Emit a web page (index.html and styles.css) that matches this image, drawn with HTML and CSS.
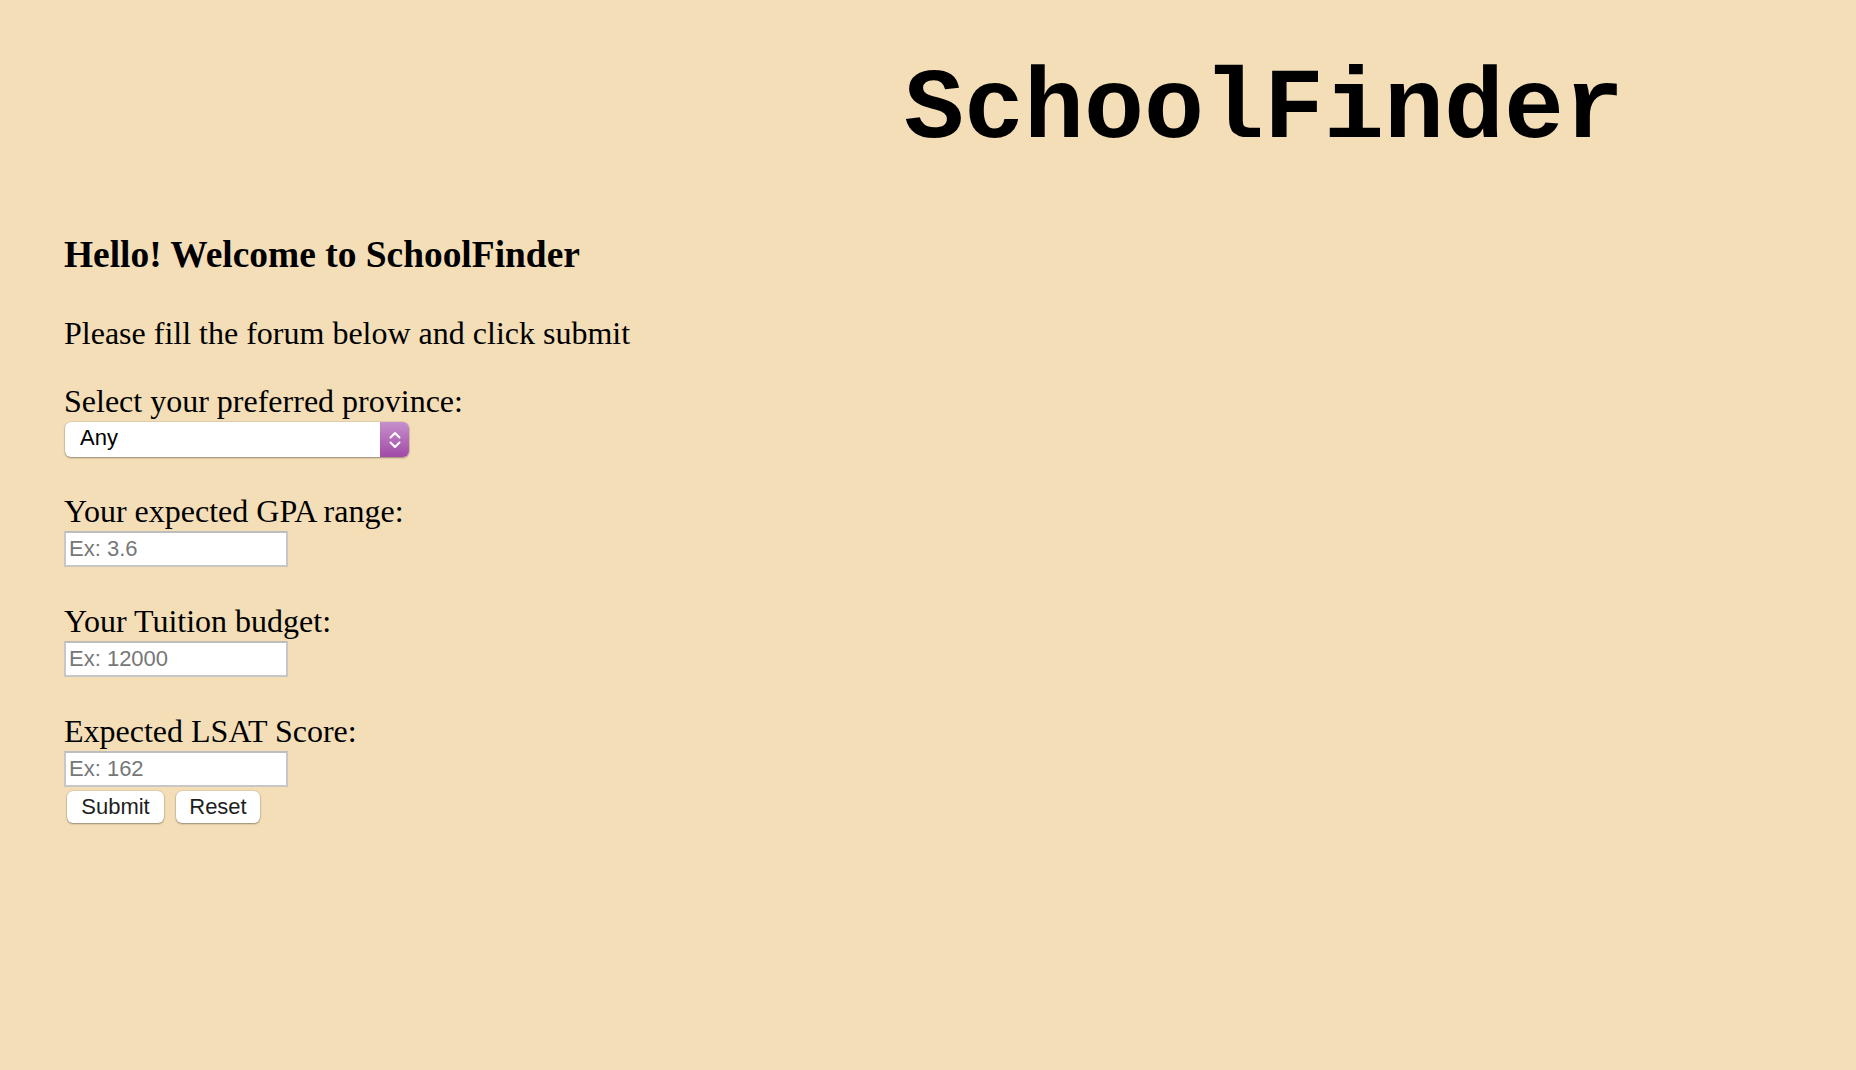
FILE: index.html
```html
<!DOCTYPE html>
<html lang="en">
<head>
<meta charset="utf-8">
<title>SchoolFinder</title>
<link rel="stylesheet" href="styles.css">
</head>
<body>
<header class="top">
  <h1 class="brand">SchoolFinder</h1>
</header>
<main class="content">
  <h3 class="welcome">Hello! Welcome to SchoolFinder</h3>
  <p class="intro">Please fill the forum below and click submit</p>
  <form class="finder">
    <div class="group">
      <label class="label" for="prov">Select your preferred province:</label>
      <div class="select-wrap">
        <select id="prov" class="select">
          <option>Any</option>
        </select>
        <span class="select-arrow">
          <svg width="14" height="20" viewBox="0 0 14 20" fill="none" stroke="#fff" stroke-width="2" stroke-linecap="round" stroke-linejoin="round"><path d="M2.5 7.5 L7 3 L11.5 7.5"/><path d="M2.5 12.5 L7 17 L11.5 12.5"/></svg>
        </span>
      </div>
    </div>
    <div class="group">
      <label class="label" for="gpa">Your expected GPA range:</label>
      <input id="gpa" class="field" type="text" placeholder="Ex: 3.6">
    </div>
    <div class="group">
      <label class="label" for="tuition">Your Tuition budget:</label>
      <input id="tuition" class="field" type="text" placeholder="Ex: 12000">
    </div>
    <div class="group last">
      <label class="label" for="lsat">Expected LSAT Score:</label>
      <input id="lsat" class="field" type="text" placeholder="Ex: 162">
    </div>
    <div class="actions">
      <button type="submit" class="btn btn-submit">Submit</button>
      <button type="reset" class="btn btn-reset">Reset</button>
    </div>
  </form>
</main>
</body>
</html>
```

FILE: styles.css
```css
html, body {
  margin: 0;
  padding: 0;
}
body {
  background: #f3deb8;
  color: #000;
  font-family: "Liberation Serif", "Times New Roman", serif;
  font-size: 32px;
  min-height: 1070px;
}
.top {
  padding-top: 54px;
  padding-left: 904px;
}
.brand {
  margin: 0;
  font-family: "Courier New", "Nimbus Mono PS", "Nimbus Mono L", FreeMono, "Liberation Mono", monospace;
  font-weight: bold;
  font-size: 100px;
  line-height: 114px;
}
.content {
  padding-left: 64px;
  padding-top: 65px;
}
.welcome {
  margin: 0;
  font-size: 37.44px;
  font-weight: bold;
  line-height: 44px;
}
.intro {
  margin: 38px 0 0 0;
  line-height: 36px;
}
.finder {
  margin-top: 32px;
  display: flex;
  flex-direction: column;
}
.group {
  display: flex;
  flex-direction: column;
  align-items: flex-start;
  margin-bottom: 36px;
}
.group.last {
  margin-bottom: 4px;
}
.label {
  line-height: 36px;
}
.select-wrap {
  position: relative;
  margin-top: 3px;
  margin-left: 1px;
  width: 344px;
  height: 35px;
  border-radius: 6px;
  background: #fff;
  box-shadow: 0 1px 2px rgba(0,0,0,0.35), 0 0 0 0.5px rgba(0,0,0,0.12);
  overflow: hidden;
}
.select {
  appearance: none;
  -webkit-appearance: none;
  box-sizing: border-box;
  display: block;
  border: 0;
  margin: 0;
  width: 100%;
  height: 35px;
  line-height: 32px;
  padding: 0 0 3px 15px;
  background: transparent;
  font-family: "Liberation Sans", Arial, sans-serif;
  font-size: 22px;
  color: #000;
  outline: none;
}
.select-arrow {
  position: absolute;
  right: 0;
  top: 0;
  width: 29px;
  height: 35px;
  background: linear-gradient(#c690cb, #a14aa6);
  display: flex;
  align-items: center;
  justify-content: center;
  pointer-events: none;
}
.field {
  margin: 2px 0 0 0;
  box-sizing: border-box;
  width: 224px;
  height: 36px;
  border: 2px solid #c7c7c7;
  border-top-color: #bdbdbd;
  background: #fff;
  padding: 0 0 1px 3px;
  font-family: "Liberation Sans", Arial, sans-serif;
  font-size: 22px;
  color: #000;
  outline: none;
}
.field::placeholder {
  color: #777;
}
.actions {
  display: flex;
  gap: 12px;
  margin-left: 3px;
}
.btn {
  box-sizing: border-box;
  height: 32px;
  margin: 0;
  border: 0;
  border-radius: 6px;
  background: #fff;
  box-shadow: 0 1px 2px rgba(0,0,0,0.35), 0 0 0 0.5px rgba(0,0,0,0.12);
  font-family: "Liberation Sans", Arial, sans-serif;
  font-size: 22px;
  color: #1e1e1e;
  padding: 0;
}
.btn-submit {
  width: 97px;
}
.btn-reset {
  width: 84px;
}
```
